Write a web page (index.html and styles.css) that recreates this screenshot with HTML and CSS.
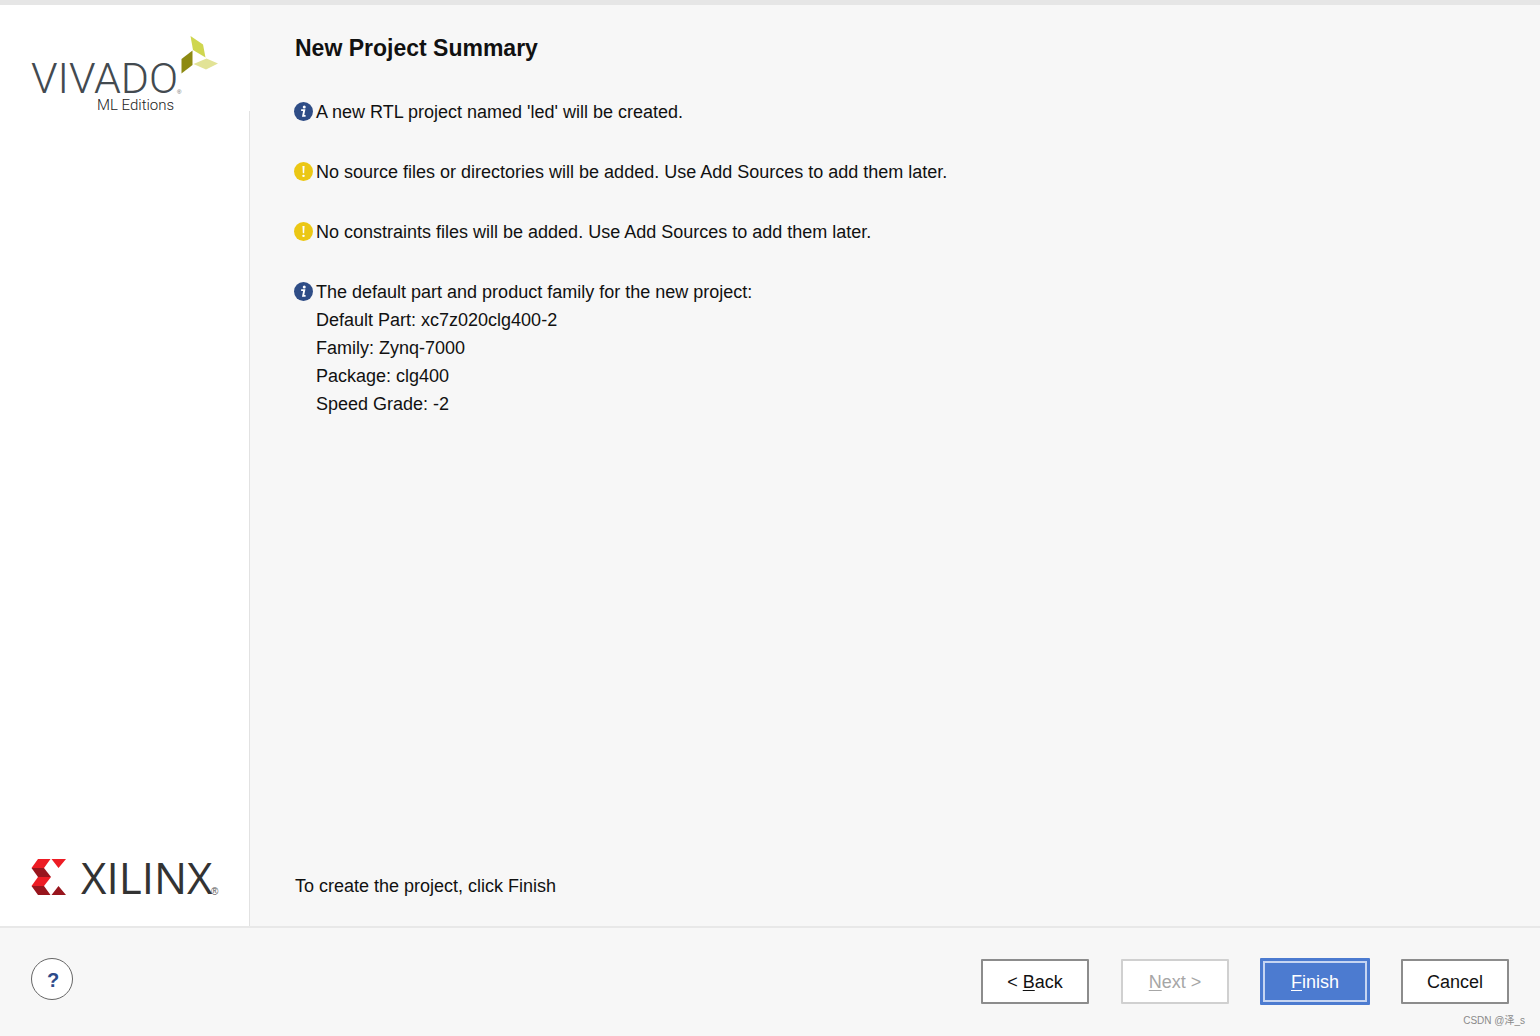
FILE: index.html
```html
<!DOCTYPE html>
<html lang="en">
<head>
<meta charset="utf-8">
<meta name="viewport" content="width=device-width, initial-scale=1">
<title>New Project</title>
<link rel="stylesheet" href="styles.css">
</head>
<body>
<div class="wizard">
  <div class="main">
    <aside class="sidebar">
      <div class="brand">
        <svg class="vivado" viewBox="0 0 250 106" role="img" aria-label="Vivado ML Editions">
          <text class="vivado-name" x="31" y="88">VIVADO</text>
          <text class="vivado-reg" x="177" y="89">®</text>
          <text class="vivado-edition" x="97" y="105">ML Editions</text>
          <path fill="#cfd64f" d="M190.500 31 203 39.500 205.500 52.500 193 45z"/>
          <path fill="#8d8a12" d="M192.500 45.500V60L181.500 68.500V54z"/>
          <path fill="#e2e396" d="M193.500 59 206.500 53.500 218 58.500 206 64.500z"/>
        </svg>
      </div>
      <div class="sidebar-body">
        <svg class="xilinx" viewBox="0 0 250 60" role="img" aria-label="Xilinx">
          <path fill="#ed1c24" d="M38 9H50.500L44 18H31.500zM51.500 9H66L58.500 18z"/>
          <path fill="#98151d" d="M31.500 18H44L51 27H38z"/>
          <path fill="#ed1c24" d="M38 27H51L44 36H31.500z"/>
          <path fill="#98151d" d="M31.500 36H44L50.500 45H38zM58.500 36 66 45H51.500z"/>
          <text class="xilinx-name" x="81" y="44">XILINX</text>
          <text class="xilinx-reg" x="211" y="45">®</text>
        </svg>
      </div>
    </aside>
    <main class="content">
      <h1 class="title">New Project Summary</h1>
      <ul class="summary">
        <li class="item">
          <svg class="icon" viewBox="0 0 20 20" aria-hidden="true"><circle cx="10" cy="10" r="10" fill="#2f4d86"/><circle cx="10.800" cy="5.300" r="1.600" fill="#fff"/><path d="M7.500 8.600H10.800L9.600 14.600H12.200" fill="none" stroke="#fff" stroke-width="2"/></svg>
          <p class="text">A new RTL project named 'led' will be created.</p>
        </li>
        <li class="item">
          <svg class="icon" viewBox="0 0 20 20" aria-hidden="true"><circle cx="10" cy="10" r="10" fill="#ebc714"/><path d="M8.900 4.200h2.200l-.4 7.600H9.300z" fill="#fff"/><circle cx="10" cy="14.600" r="1.300" fill="#fff"/></svg>
          <p class="text">No source files or directories will be added. Use Add Sources to add them later.</p>
        </li>
        <li class="item">
          <svg class="icon" viewBox="0 0 20 20" aria-hidden="true"><circle cx="10" cy="10" r="10" fill="#ebc714"/><path d="M8.900 4.200h2.200l-.4 7.600H9.300z" fill="#fff"/><circle cx="10" cy="14.600" r="1.300" fill="#fff"/></svg>
          <p class="text">No constraints files will be added. Use Add Sources to add them later.</p>
        </li>
        <li class="item">
          <svg class="icon" viewBox="0 0 20 20" aria-hidden="true"><circle cx="10" cy="10" r="10" fill="#2f4d86"/><circle cx="10.800" cy="5.300" r="1.600" fill="#fff"/><path d="M7.500 8.600H10.800L9.600 14.600H12.200" fill="none" stroke="#fff" stroke-width="2"/></svg>
          <div class="text">
            <p>The default part and product family for the new project:</p>
            <ul class="details">
              <li>Default Part: xc7z020clg400-2</li>
              <li>Family: Zynq-7000</li>
              <li>Package: clg400</li>
              <li>Speed Grade: -2</li>
            </ul>
          </div>
        </li>
      </ul>
      <p class="hint">To create the project, click Finish</p>
    </main>
  </div>
  <footer class="footer">
    <button class="help" type="button" aria-label="Help">
      <span aria-hidden="true">?</span>
    </button>
    <div class="actions">
      <button class="button" type="button">&lt; <u>B</u>ack</button>
      <button class="button" type="button" disabled><u>N</u>ext &gt;</button>
      <button class="button primary" type="button"><u>F</u>inish</button>
      <button class="button" type="button">Cancel</button>
    </div>
    <span class="watermark">CSDN @泽_s</span>
  </footer>
</div>
</body>
</html>
```

FILE: styles.css
```css
* {
  box-sizing: border-box;
}

body {
  margin: 0;
  background: #f7f7f7;
  color: #111;
  font: 18px/28px "Liberation Sans", Arial, "Noto Sans CJK SC", sans-serif;
}

h1,
p,
ul {
  margin: 0;
  padding: 0;
}

ul {
  list-style: none;
}

.wizard {
  display: flex;
  flex-direction: column;
  min-height: 100vh;
  border-top: 5px solid #e6e6e6;
}

.main {
  display: flex;
  flex: 1;
}

.sidebar {
  display: flex;
  flex-direction: column;
  flex: none;
  width: 250px;
  background: #fff;
}

.vivado,
.xilinx {
  display: block;
  width: 250px;
  overflow: visible;
}

.vivado-name {
  font: 300 43px Roboto, sans-serif;
  fill: #434a50;
}

.vivado-reg {
  font: 6px "Liberation Sans", sans-serif;
  fill: #666;
}

.vivado-edition {
  font: 300 15px Roboto, sans-serif;
  fill: #222;
}

.sidebar-body {
  display: flex;
  flex: 1;
  flex-direction: column;
  justify-content: flex-end;
  padding-bottom: 16px;
  border-right: 1px solid #e2e2e2;
}

.xilinx-name {
  font: 44px "Open Sans", sans-serif;
  fill: #333;
}

.xilinx-reg {
  font: 10px "Liberation Sans", sans-serif;
  fill: #555;
}

.content {
  display: flex;
  flex: 1;
  flex-direction: column;
  padding: 29px 44px 26px;
}

.title {
  padding-left: 1px;
  font-size: 23px;
  line-height: 28px;
}

.summary {
  display: flex;
  flex-direction: column;
  gap: 32px;
  margin-top: 36px;
}

.item {
  display: flex;
  gap: 3px;
}

.icon {
  flex: none;
  width: 19px;
  height: 19px;
  margin-top: 4px;
}

.hint {
  margin-top: auto;
  padding-left: 1px;
}

.footer {
  position: relative;
  display: flex;
  align-items: flex-start;
  justify-content: space-between;
  height: 110px;
  padding: 30px 31px 0;
  border-top: 2px solid #e8e8e8;
}

.help {
  width: 42px;
  height: 42px;
  padding: 2px 0 0 2px;
  border: 1px solid #666;
  border-radius: 50%;
  background: #fff;
  color: #2d4a8a;
  font: bold 20px "Liberation Sans", sans-serif;
}

.actions {
  display: flex;
  align-items: center;
  gap: 32px;
}

.button {
  width: 108px;
  height: 45px;
  padding: 0;
  border: 2px solid #8c8c8c;
  border-radius: 1px;
  background: #fff;
  color: #111;
  font: inherit;
}

.button u {
  text-underline-offset: 2px;
}

.button:disabled {
  border-color: #d0d0d0;
  color: #a6a6a6;
}

.primary {
  width: 110px;
  height: 47px;
  margin: 0 -1px;
  border: 3px solid #4c7bd0;
  background: #4c7bd0;
  box-shadow: inset 0 0 0 2px #c6d5f2;
  color: #fff;
}

.watermark {
  position: absolute;
  right: 15px;
  bottom: 6px;
  color: #8a8a8a;
  font-size: 10px;
  line-height: 18px;
}
```
